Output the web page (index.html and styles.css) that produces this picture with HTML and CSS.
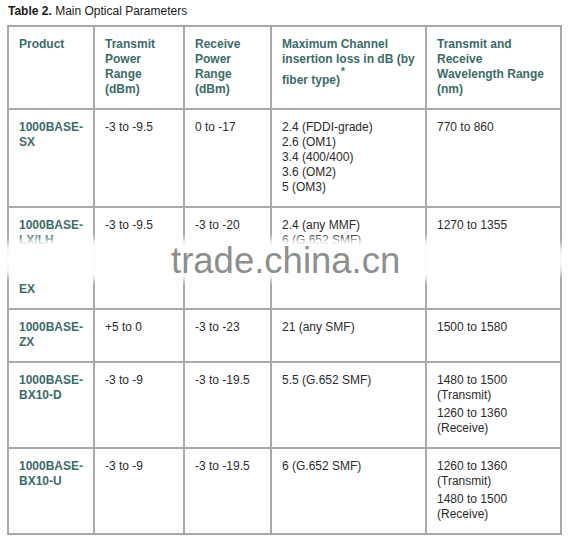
FILE: index.html
```html
<!DOCTYPE html>
<html>
<head>
<meta charset="utf-8">
<link rel="stylesheet" href="styles.css">
</head>
<body>
<div class="page">
  <div class="title"><b>Table 2.</b> Main Optical Parameters</div>
  <table class="params">
    <colgroup>
      <col class="c1"><col class="c2"><col class="c3"><col class="c4"><col class="c5">
    </colgroup>
    <tr class="head">
      <td>Product</td>
      <td>Transmit Power Range (dBm)</td>
      <td>Receive Power Range (dBm)</td>
      <td>Maximum Channel insertion loss in dB (by fiber type)<sup>*</sup></td>
      <td>Transmit and Receive Wavelength Range (nm)</td>
    </tr>
    <tr>
      <td class="prod">1000BASE-SX</td>
      <td>-3 to -9.5</td>
      <td>0 to -17</td>
      <td>2.4 (FDDI-grade)<br>2.6 (OM1)<br>3.4 (400/400)<br>3.6 (OM2)<br>5 (OM3)</td>
      <td>770 to 860</td>
    </tr>
    <tr>
      <td class="prod"><p>1000BASE-LX/LH</p><p class="gap">EX</p></td>
      <td>-3 to -9.5</td>
      <td>-3 to -20</td>
      <td>2.4 (any MMF)<br>6 (G.652 SMF)</td>
      <td>1270 to 1355</td>
    </tr>
    <tr>
      <td class="prod">1000BASE-ZX</td>
      <td>+5 to 0</td>
      <td>-3 to -23</td>
      <td>21 (any SMF)</td>
      <td>1500 to 1580</td>
    </tr>
    <tr>
      <td class="prod">1000BASE-BX10-D</td>
      <td>-3 to -9</td>
      <td>-3 to -19.5</td>
      <td>5.5 (G.652 SMF)</td>
      <td><p>1480 to 1500 (Transmit)</p><p class="next">1260 to 1360 (Receive)</p></td>
    </tr>
    <tr>
      <td class="prod">1000BASE-BX10-U</td>
      <td>-3 to -9</td>
      <td>-3 to -19.5</td>
      <td>6 (G.652 SMF)</td>
      <td><p>1260 to 1360 (Transmit)</p><p class="next">1480 to 1500 (Receive)</p></td>
    </tr>
  </table>
  <div class="wm-band"></div>
  <div class="wm-text">trade.china.cn</div>
</div>
</body>
</html>
```

FILE: styles.css
```css
html, body {
  margin: 0;
  padding: 0;
  background: #fff;
}
.page {
  position: relative;
  width: 570px;
  height: 546px;
  padding: 4px 0 0 7px;
  box-sizing: border-box;
  font-family: "Liberation Sans", Arial, sans-serif;
  font-size: 12px;
  color: #2b2b2b;
}
.title {
  line-height: 15px;
  padding-left: 1px;
  color: #1a1a1a;
  margin-bottom: 6px;
}
.params {
  border-collapse: collapse;
  table-layout: fixed;
  width: 553px;
}
.c1 { width: 86px; }
.c2 { width: 90px; }
.c3 { width: 87px; }
.c4 { width: 155px; }
.c5 { width: 135px; }
.params td {
  border: 2px solid #a9a9a9;
  padding: 10px 10px 11px 10px;
  vertical-align: top;
  line-height: 15px;
}
.params p {
  margin: 0;
}
.params p.next {
  margin-top: 3px;
}
.params p.gap {
  margin-top: 34px;
}
.head td {
  color: #3c6a69;
  font-weight: bold;
}
.head sup {
  font-size: 10px;
  line-height: 10px;
  vertical-align: 9px;
  margin-left: 1px;
}
.prod {
  color: #3c6a69;
  font-weight: bold;
}
.wm-band {
  position: absolute;
  left: 0;
  top: 239px;
  width: 566px;
  height: 41px;
  border-radius: 20px;
  background: rgba(255, 255, 255, 0.96);
  filter: blur(3px);
}
.wm-text {
  position: absolute;
  left: 171px;
  top: 239px;
  font-family: "Liberation Sans", Arial, sans-serif;
  font-size: 36.5px;
  line-height: 44px;
  color: #8e8e8e;
}
```
